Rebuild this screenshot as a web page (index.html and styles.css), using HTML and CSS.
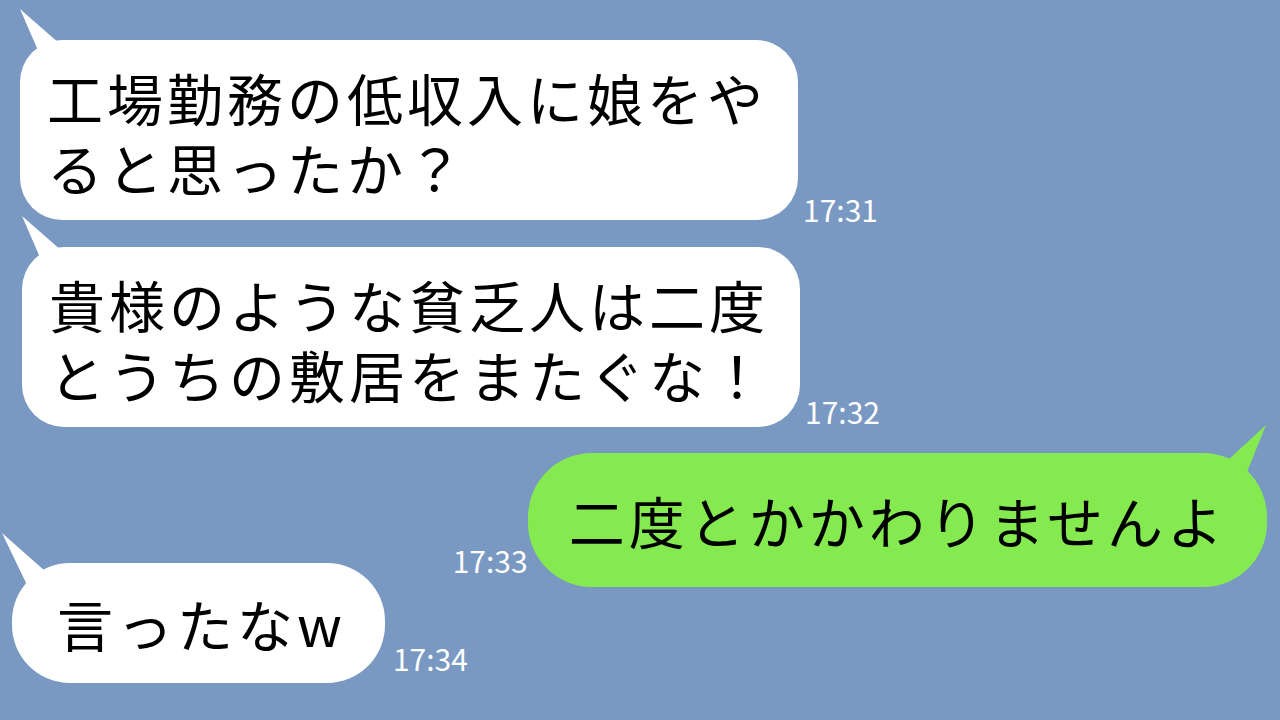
FILE: index.html
```html
<!DOCTYPE html>
<html lang="ja">
<head>
<meta charset="utf-8">
<title>トーク</title>
<link rel="stylesheet" href="styles.css">
</head>
<body>
<main class="chat">
  <div class="row row-1">
    <div class="bubble bubble-in bubble-two"><p class="msg">工場勤務の低収入に娘をや<br>ると思ったか？</p></div>
    <span class="time time-1">17:31</span>
  </div>
  <div class="row row-2">
    <div class="bubble bubble-in bubble-two"><p class="msg">貴様のような貧乏人は二度<br>とうちの敷居をまたぐな！</p></div>
    <span class="time time-2">17:32</span>
  </div>
  <div class="row row-3">
    <span class="time time-3">17:33</span>
    <div class="bubble bubble-out"><p class="msg">二度とかかわりませんよ</p></div>
  </div>
  <div class="row row-4">
    <div class="bubble bubble-in bubble-short"><p class="msg">言ったなw</p></div>
    <span class="time time-4">17:34</span>
  </div>
</main>
</body>
</html>
```
FILE: styles.css
```css
html, body {
  margin: 0;
  padding: 0;
}
body {
  background: #7998c2;
  font-family: "Noto Sans CJK JP", "Noto Sans", sans-serif;
  color: #000;
}
.chat {
  width: 1280px;
  height: 720px;
  box-sizing: border-box;
  padding-top: 40px;
  display: flex;
  flex-direction: column;
  overflow: hidden;
}
.row {
  display: flex;
  align-items: flex-end;
}
.row-1 {
  margin-left: 20px;
  gap: 5px;
}
.row-2 {
  margin-top: 27px;
  margin-left: 22px;
  gap: 5px;
}
.row-3 {
  margin-top: 26px;
  justify-content: flex-end;
  padding-right: 13px;
  gap: 0;
}
.row-4 {
  margin-top: -24px;
  margin-left: 12px;
  gap: 8px;
}
.bubble {
  position: relative;
  background: #fff;
}
.msg {
  margin: 0;
  font-size: 56px;
  letter-spacing: 4px;
  line-height: 70px;
  white-space: nowrap;
}
.bubble-two {
  border-radius: 42px;
  padding: 22px 31px 18px 27px;
}
.bubble-short {
  border-radius: 58px;
  padding: 25px 39px 25px 45px;
}
.bubble-out {
  background: #85ea50;
  border-radius: 64px;
  padding: 32px 40px 32px 41px;
}
.bubble-two::before {
  content: "";
  position: absolute;
  left: 0;
  top: -31px;
  width: 42px;
  height: 48px;
  background: #fff;
  clip-path: polygon(0 0, 40px 35px, 20px 46px);
}
.bubble-short::before {
  content: "";
  position: absolute;
  left: -10px;
  top: -30px;
  width: 45px;
  height: 54px;
  background: #fff;
  clip-path: polygon(0 0, 43px 38px, 25px 52px);
}
.bubble-out::before {
  content: "";
  position: absolute;
  right: 0;
  top: -28px;
  width: 42px;
  height: 48px;
  background: #85ea50;
  clip-path: polygon(41px 0, 3px 35px, 22px 47px);
}
.time {
  color: #fff;
  font-size: 30px;
  line-height: 30px;
  white-space: nowrap;
}
.time-1 { margin-bottom: -4px; }
.time-2 { margin-bottom: 1px; }
.time-3 { margin-bottom: 12px; }
.time-4 { margin-bottom: 10px; }
```
